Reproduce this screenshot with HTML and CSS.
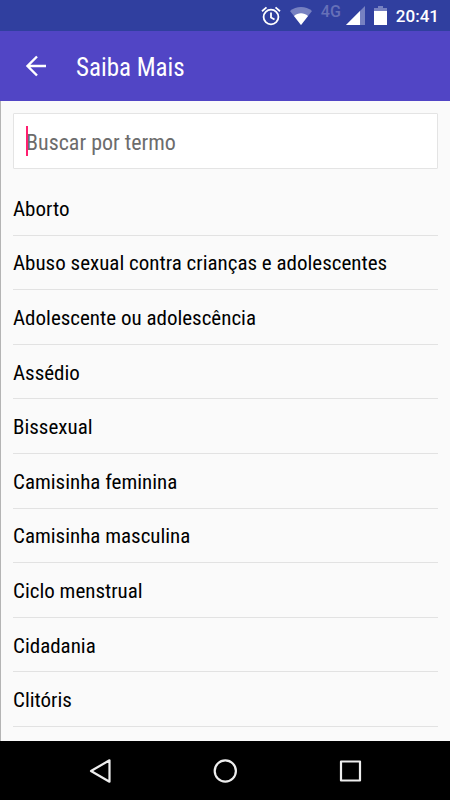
FILE: index.html
```html
<!DOCTYPE html>
<html lang="pt-BR">
<head>
<meta charset="utf-8">
<meta name="viewport" content="width=device-width, initial-scale=1">
<title>Saiba Mais</title>
<link rel="stylesheet" href="styles.css">
</head>
<body>
<div class="status">
  <svg width="20" height="20" viewBox="0 0 20 20" fill="none" stroke="#fff" stroke-width="1.8"><circle cx="10" cy="11" r="7.4"/><path d="M10 6.500v5l3.500 2M1 5.200l4.500-3.800M19 5.200l-4.500-3.800"/></svg>
  <svg width="22" height="18" viewBox="0 0 22 18"><path fill="#7781c1" d="M0 4C6-1.300 16-1.300 22 4L11 18z"/><path fill="#fff" d="M4 9c4-3.600 10-3.600 14 0l-7 9z"/></svg>
  <div class="mobile">
    <span class="network">4G</span>
    <svg width="19" height="19" viewBox="0 0 19 19"><path fill="#7781c1" d="M19 0v19H0z"/><path fill="#fff" d="M14 5v14H0z"/></svg>
  </div>
  <svg width="13" height="19" viewBox="0 0 13 19"><path fill="#7781c1" d="M4 0h5v2h4v4H0V2h4z"/><path fill="#fff" d="M0 5h13v14H0z"/></svg>
  <time>20:41</time>
</div>
<header class="appbar">
  <button class="back" aria-label="Voltar"><svg width="22" height="22" viewBox="0 0 22 22" fill="none" stroke="#fff" stroke-width="2.400"><path d="M21 11H3M12 1.500L2.500 11l9.500 9.500"/></svg></button>
  <h1>Saiba Mais</h1>
</header>
<main>
  <div class="search">
    <input type="text" placeholder="Buscar por termo" aria-label="Buscar por termo">
    <span class="caret"></span>
  </div>
  <ul class="terms">
    <li>Aborto</li>
    <li>Abuso sexual contra crianças e adolescentes</li>
    <li>Adolescente ou adolescência</li>
    <li>Assédio</li>
    <li>Bissexual</li>
    <li>Camisinha feminina</li>
    <li>Camisinha masculina</li>
    <li>Ciclo menstrual</li>
    <li>Cidadania</li>
    <li>Clitóris</li>
  </ul>
</main>
<nav class="navbar">
  <button aria-label="Voltar"><svg width="24" height="24" viewBox="0 0 24 24" fill="none" stroke="#eee" stroke-width="2.200" stroke-linejoin="round"><path d="M21.500 1.300v21.400L3 12z"/></svg></button>
  <button aria-label="Início"><svg width="24" height="24" viewBox="0 0 24 24" fill="none" stroke="#eee" stroke-width="2.200"><circle cx="12.300" cy="12" r="10.600"/></svg></button>
  <button aria-label="Recentes"><svg width="24" height="24" viewBox="0 0 24 24" fill="none" stroke="#eee" stroke-width="2.200" stroke-linejoin="round"><path d="M3 2.500h19v19H3z"/></svg></button>
</nav>
</body>
</html>
```
FILE: styles.css
```css
* { box-sizing: border-box; }

body {
  margin: 0;
  min-height: 100vh;
  display: flex;
  flex-direction: column;
  background: #fafafa;
  font-family: "Roboto Condensed", Roboto, sans-serif;
  color: #000;
}

button {
  border: 0;
  padding: 0;
  background: none;
  display: flex;
}

svg { display: block; }

.status {
  height: 31px;
  background: #303f9f;
  color: #fff;
  display: flex;
  align-items: center;
  justify-content: flex-end;
  gap: 9px;
  padding: 0 11px;
  font: 500 17px Roboto, sans-serif;
}

.mobile {
  display: flex;
  gap: 5px;
}

.network {
  color: #6670b8;
  font-size: 16px;
  line-height: 12px;
}

.appbar {
  height: 70px;
  background: #5145c5;
  display: flex;
  align-items: center;
  padding: 0 25px;
  gap: 29px;
  color: #fff;
}

h1 {
  margin: 0;
  padding-top: 2px;
  font-size: 25px;
  font-weight: 400;
}

main {
  flex: 1;
  display: flex;
  flex-direction: column;
  padding: 12px 12px 14px;
  border-left: 1px solid #b4b4b4;
}

.search {
  position: relative;
  height: 56px;
}

.search input {
  width: 100%;
  height: 100%;
  border: 1px solid #e4e4e4;
  border-radius: 1px;
  background: #fff;
  padding: 2px 12px 0;
  font: inherit;
  font-size: 22px;
}

.search input::placeholder {
  color: #6c6c6c;
  opacity: 1;
}

.caret {
  position: absolute;
  left: 13px;
  top: 13px;
  width: 2px;
  height: 30px;
  background: #ff1f70;
}

.terms {
  flex: 1;
  margin: 12px 0 0;
  padding: 0;
  list-style: none;
  display: grid;
  grid-auto-rows: 1fr;
}

.terms li {
  display: flex;
  align-items: center;
  padding-top: 2px;
  border-bottom: 1px solid #e2e2e2;
  font-size: 21px;
}

.navbar {
  height: 59px;
  background: #000;
  display: flex;
  align-items: center;
  justify-content: center;
  gap: 101px;
}
```
